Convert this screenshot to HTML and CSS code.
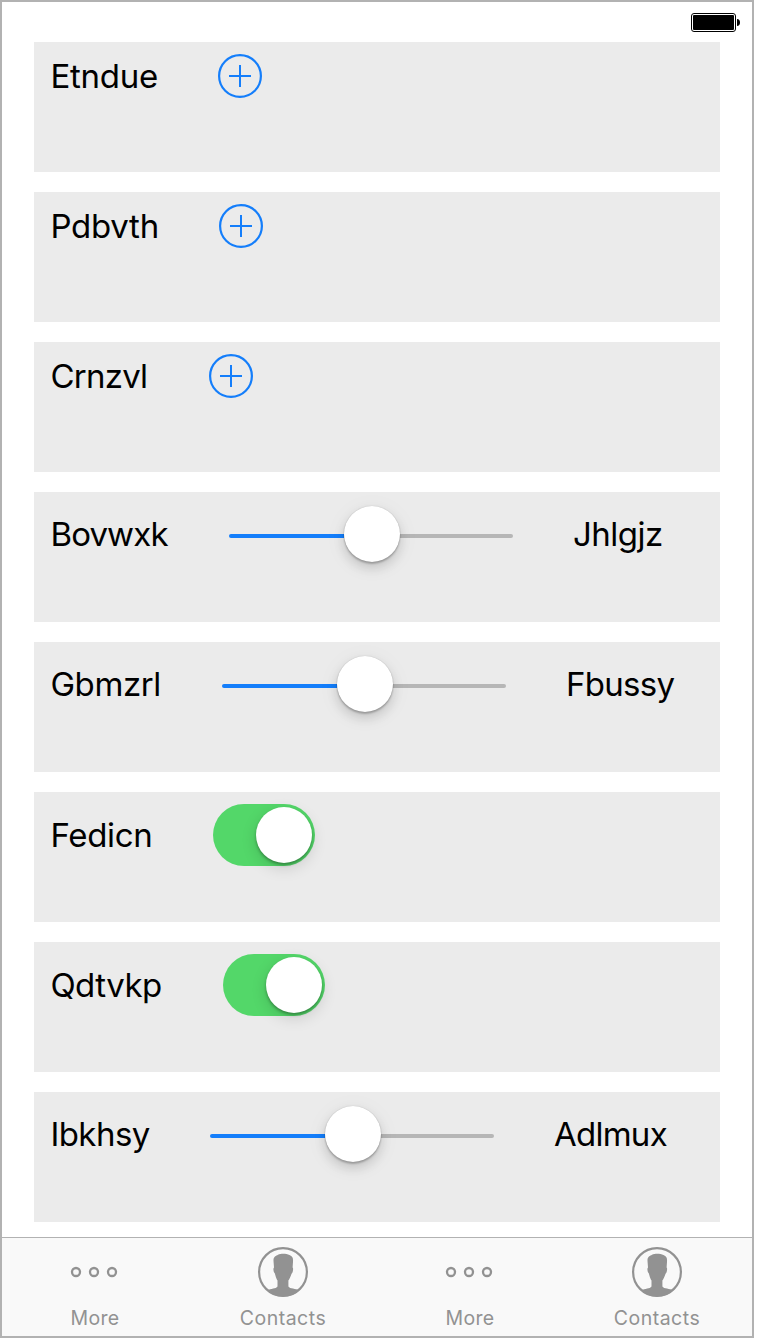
FILE: index.html
```html
<!DOCTYPE html>
<html lang="en">
<head>
<meta charset="utf-8">
<title>Controls</title>
<link rel="stylesheet" href="styles.css">
</head>
<body>
<svg class="defs" width="0" height="0" aria-hidden="true">
  <symbol id="plus" viewBox="0 0 44 44"><circle cx="22" cy="22" r="20.9" fill="none" stroke="currentColor" stroke-width="2.2"/><path d="M11 22H33M22 11V33" fill="none" stroke="currentColor" stroke-width="2"/></symbol>
  <symbol id="more" viewBox="0 0 50 50"><g fill="none" stroke="currentColor" stroke-width="2.3"><circle cx="6" cy="25" r="4"/><circle cx="24" cy="25" r="4"/><circle cx="42" cy="25" r="4"/></g></symbol>
  <symbol id="contact" viewBox="0 0 50 50"><circle cx="25" cy="25" r="23.9" fill="none" stroke="currentColor" stroke-width="2.2"/><path fill="currentColor" d="M15.5 14C15.3 9.5 18 9 20 7.8C23 6.4 28 6.5 31.5 8C34.5 9.2 35.3 11 35 15L34.6 20.5C35.6 21 35 24.5 34.2 26C33.3 26.2 32.5 31 30.4 33.5V39.5C32 42 37.5 41.4 41.5 43.2Q35 49.5 25 49.5Q15 49.5 9.2 43.2C13 41.4 17.8 42 19.5 39.5V33.5C17.7 31 17.2 26.5 16.5 26C15.3 24.5 15 21.2 16 20.5Z"/></symbol>
</svg>
<div class="screen">
  <header class="status">
    <svg class="battery" width="50" height="20" viewBox="0 0 50 20"><rect x="1.5" y="1.5" width="44" height="18" rx="2.5" fill="none" stroke="#000"/><rect x="3" y="3" width="41" height="15" rx="1"/><path d="M47 7Q50 7.4 50 10.5T47 14Z"/></svg>
  </header>
  <main class="cards">
    <section class="card"><span class="label w-etndue">Etndue</span><svg class="add"><use href="#plus"/></svg></section>
    <section class="card"><span class="label w-pdbvth">Pdbvth</span><svg class="add"><use href="#plus"/></svg></section>
    <section class="card"><span class="label w-crnzvl">Crnzvl</span><svg class="add"><use href="#plus"/></svg></section>
    <section class="card card-slider"><span class="label w-bovwxk">Bovwxk</span><div class="slider"><i class="fill"></i><i class="knob"></i><i class="rest"></i></div><span class="label w-jhlgjz">Jhlgjz</span></section>
    <section class="card card-slider"><span class="label w-gbmzrl">Gbmzrl</span><div class="slider"><i class="fill"></i><i class="knob"></i><i class="rest"></i></div><span class="label w-fbussy">Fbussy</span></section>
    <section class="card card-switch"><span class="label w-fedicn">Fedicn</span><div class="switch"><i class="knob"></i></div></section>
    <section class="card card-switch"><span class="label w-qdtvkp">Qdtvkp</span><div class="switch"><i class="knob"></i></div></section>
    <section class="card card-slider"><span class="label w-ibkhsy">Ibkhsy</span><div class="slider"><i class="fill"></i><i class="knob"></i><i class="rest"></i></div><span class="label w-adlmux">Adlmux</span></section>
  </main>
  <nav class="tabs">
    <div class="tab"><svg class="icon"><use href="#more"/></svg><span class="caption">More</span></div>
    <div class="tab"><svg class="icon"><use href="#contact"/></svg><span class="caption wide">Contacts</span></div>
    <div class="tab"><svg class="icon"><use href="#more"/></svg><span class="caption">More</span></div>
    <div class="tab"><svg class="icon"><use href="#contact"/></svg><span class="caption wide">Contacts</span></div>
  </nav>
</div>
</body>
</html>
```
FILE: styles.css
```css
* { box-sizing: border-box; }
body { margin: 0; background: #fff; font-family: Inter, "Liberation Sans", sans-serif; color: #000; }
.defs { display: block; }
.screen { width: 754px; height: 1338px; border: 2px solid #b2b2b2; display: flex; flex-direction: column; background: #fff; }
.status { height: 40px; display: flex; justify-content: flex-end; align-items: flex-start; padding: 10px 12px 0 0; }
.battery { display: block; }
.cards { flex: 1; display: flex; flex-direction: column; gap: 20px; padding: 0 32px; }
.card { height: 130px; flex: none; background: #ebebeb; padding: 12px 16px; display: flex; align-items: flex-start; }
.label { flex: none; font-size: 33px; line-height: 44px; white-space: nowrap; padding-left: .4px; }
.add { flex: none; width: 44px; height: 44px; color: #147efb; }
.card-slider .label { margin-top: 8px; }
.card-switch .label { margin-top: 9px; }
.slider { flex: none; width: 284px; height: 60px; display: flex; align-items: center; }
.fill, .rest { flex: none; height: 4px; margin-top: 4px; }
.fill { width: 115px; background: #147efb; border-radius: 2px 0 0 2px; }
.rest { width: 113px; background: #b6b6b6; border-radius: 0 2px 2px 0; }
.knob { flex: none; width: 56px; height: 56px; border-radius: 50%; background: #fff; z-index: 1; }
.slider .knob { box-shadow: 0 0 1px rgba(0,0,0,.25), 0 2px 2px rgba(0,0,0,.22), 0 6px 12px rgba(0,0,0,.14), 0 4px 24px rgba(0,0,0,.05); }
.switch { flex: none; width: 102px; height: 62px; border-radius: 31px; background: #53d769; padding: 3px; display: flex; justify-content: flex-end; }
.switch .knob { box-shadow: 0 2px 3px rgba(0,0,0,.3), 0 5px 16px rgba(0,0,0,.14); }
.w-etndue { width: 168px; letter-spacing: -.25px; }
.w-pdbvth { width: 169px; letter-spacing: -.25px; }
.w-crnzvl { width: 159px; letter-spacing: -.75px; }
.w-bovwxk { width: 179px; letter-spacing: -.85px; }
.w-gbmzrl { width: 172px; letter-spacing: -.4px; }
.w-fedicn { width: 163px; letter-spacing: -.3px; }
.w-qdtvkp { width: 173px; letter-spacing: -.5px; }
.w-ibkhsy { width: 160px; letter-spacing: -.55px; }
.w-jhlgjz, .w-fbussy, .w-adlmux { padding-left: 60px; }
.w-jhlgjz { letter-spacing: -.5px; }
.w-fbussy { letter-spacing: -.7px; }
.w-adlmux { letter-spacing: -.75px; }
.tabs { height: 99px; flex: none; border-top: 1px solid #b2b2b2; background: #f9f9f9; display: grid; grid-template-columns: 187px 188px 187px 187px; color: #929292; }
.tab { display: flex; flex-direction: column; align-items: flex-start; padding: 9px 0 0 68px; }
.tab:nth-child(even) { padding-left: 69px; }
.tab:nth-child(4) { padding-left: 68px; }
.icon { width: 50px; height: 50px; }
.caption { width: 50px; text-align: center; font-size: 19.5px; line-height: 24px; margin-top: 9px; letter-spacing: .3px; }
.caption.wide { width: 90px; margin-left: -20px; letter-spacing: .5px; }
```
